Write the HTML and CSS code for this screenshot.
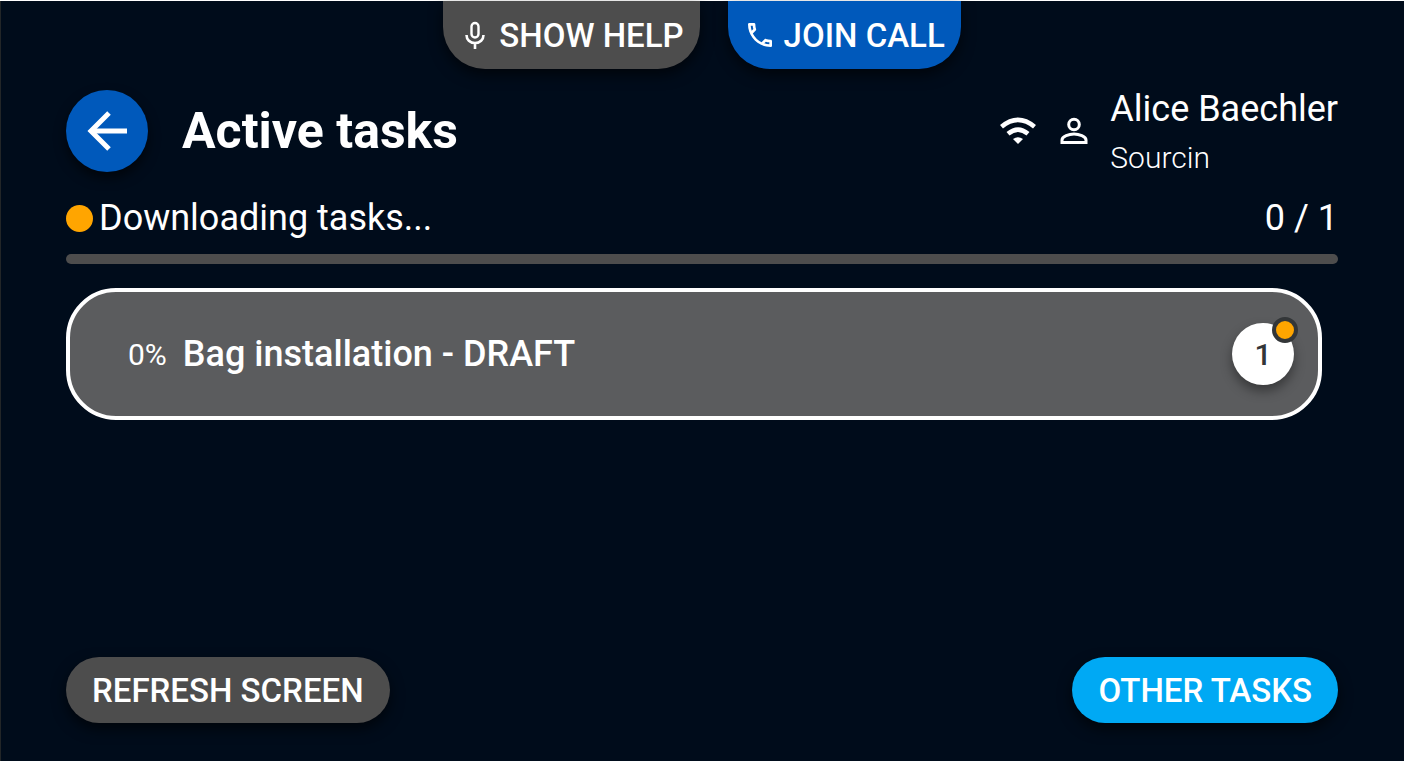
FILE: index.html
```html
<!DOCTYPE html>
<html lang="en">
<head>
<meta charset="utf-8">
<meta name="viewport" content="width=device-width, initial-scale=1">
<title>Active tasks</title>
<link rel="stylesheet" href="styles.css">
</head>
<body>
<div class="screen">
  <nav class="tabs" aria-label="Assistance">
    <button class="tab tab-help" type="button">
      <svg class="tab-icon" viewBox="0 0 32 32" fill="none" stroke="currentColor" stroke-width="2.400" aria-hidden="true"><rect x="12.500" y="4" width="7" height="14.500" rx="3.500"/><path d="M7.500 16c0 4.500 3.500 8 8.500 8s8.500-3.500 8.500-8M16 24v6" stroke-width="2.600"/></svg>
      <span>SHOW HELP</span>
    </button>
    <button class="tab tab-call" type="button">
      <svg class="tab-icon" viewBox="0 0 24 24" fill="currentColor" aria-hidden="true"><path d="M6.540 5c.06.890.210 1.760.450 2.590l-1.200 1.200c-.410-1.200-.670-2.470-.760-3.790h1.510m9.860 12.020c.850.240 1.720.390 2.600.450v1.490c-1.320-.09-2.590-.350-3.800-.750l1.200-1.190M7.500 3H4c-.550 0-1 .450-1 1 0 9.390 7.610 17 17 17 .550 0 1-.450 1-1v-3.490c0-.550-.450-1-1-1-1.240 0-2.450-.200-3.570-.570-.360-.110-.750-.020-1.020.240l-2.200 2.200a15.050 15.050 0 0 1-6.590-6.590l2.200-2.200c.280-.280.360-.670.250-1.020A11.360 11.360 0 0 1 8.500 4c0-.550-.450-1-1-1z"/></svg>
      <span>JOIN CALL</span>
    </button>
  </nav>

  <header class="header">
    <button class="back" type="button" aria-label="Back">
      <svg class="back-icon" viewBox="0 0 44 44" fill="none" stroke="currentColor" stroke-width="5" aria-hidden="true"><path d="M42 22H6"/><path d="M24 4 6 22 24 40"/></svg>
    </button>
    <h1 class="title">Active tasks</h1>
    <div class="status">
      <svg class="wifi" viewBox="0 0 36 28" aria-hidden="true"><path d="M1.500 9.700Q18-4 34.500 9.700" fill="none" stroke="currentColor" stroke-width="4.600"/><path d="M8 16.800Q18 8.500 28 16.800" fill="none" stroke="currentColor" stroke-width="4.600"/><path d="M13 22Q18 18.500 23 22L18 27Z" fill="currentColor"/></svg>
      <svg class="person" viewBox="0 0 28 28" fill="none" stroke="currentColor" stroke-width="3" aria-hidden="true"><circle cx="14" cy="7.500" r="5.300"/><path d="M2 25.500V23c0-3.500 7-6 12-6s12 2.500 12 6v2.500Z"/></svg>
      <div class="user">
        <span class="user-name">Alice Baechler</span>
        <span class="user-org">Sourcin</span>
      </div>
    </div>
  </header>

  <main class="content">
    <div class="download">
      <span class="dot"></span>
      <label class="download-label" for="download-progress">Downloading tasks...</label>
      <span class="download-count">0 / 1</span>
    </div>
    <progress class="bar" id="download-progress" value="0" max="1"></progress>
    <button class="task" type="button">
      <span class="task-percent">0%</span>
      <span class="task-name">Bag installation - DRAFT</span>
      <span class="badge">1<span class="badge-dot"></span></span>
    </button>
  </main>

  <footer class="footer">
    <button class="pill pill-refresh" type="button">REFRESH SCREEN</button>
    <button class="pill pill-other" type="button">OTHER TASKS</button>
  </footer>
</div>
</body>
</html>
```
FILE: styles.css
```css
* {
  box-sizing: border-box;
}

body {
  margin: 0;
  background: #000c1b;
  color: #fff;
  font-family: Roboto, "Liberation Sans", sans-serif;
}

button {
  border: 0;
  color: inherit;
  font: inherit;
  cursor: pointer;
}

.screen {
  display: flex;
  flex-direction: column;
  min-height: 100vh;
  padding: 0 66px 38px;
  border: solid #fff;
  border-width: 1px 0;
  box-shadow: inset 1px 0 #222628;
}

.tabs {
  display: flex;
  justify-content: center;
  gap: 28px;
}

.tab {
  display: flex;
  align-items: center;
  gap: 8px;
  height: 68px;
  padding: 0 16px;
  border-radius: 0 0 42px 42px;
  box-shadow: 0 6px 14px rgba(0, 0, 0, 0.6);
  font-size: 33px;
  font-weight: 500;
}

.tab-help {
  background: #4d4d4d;
}

.tab-call {
  background: #0059bb;
}

.tab-icon {
  width: 32px;
  height: 32px;
}

.header {
  display: flex;
  align-items: center;
  margin-top: 11px;
}

.back {
  display: grid;
  place-items: center;
  width: 82px;
  height: 82px;
  padding: 0;
  border-radius: 50%;
  background: #0059bb;
  box-shadow: 0 6px 12px rgba(0, 0, 0, 0.6);
}

.back-icon {
  width: 44px;
  height: 44px;
}

.title {
  margin: 0 0 0 34px;
  font-size: 50px;
  font-weight: 700;
  line-height: 60px;
}

.status {
  display: flex;
  align-items: center;
  margin-left: auto;
}

.wifi {
  width: 36px;
  height: 28px;
  margin-right: 24px;
}

.person {
  width: 28px;
  height: 28px;
  margin-right: 22px;
}

.user {
  display: flex;
  flex-direction: column;
  padding-top: 4px;
}

.user-name {
  font-size: 36px;
  line-height: 50px;
}

.user-org {
  font-size: 30px;
  font-weight: 300;
  line-height: 48px;
}

.download {
  display: flex;
  align-items: center;
  margin-top: 14px;
  font-size: 36px;
  line-height: 44px;
}

.dot {
  width: 27px;
  height: 27px;
  margin-right: 6px;
  border-radius: 50%;
  background: #ffa500;
}

.download-count {
  margin-left: auto;
}

.bar {
  display: block;
  width: 100%;
  height: 10px;
  margin-top: 14px;
  border: 0;
  border-radius: 5px;
  overflow: hidden;
  background: #4d4d4d;
  appearance: none;
}

.bar::-webkit-progress-bar {
  background: #4d4d4d;
}

.bar::-webkit-progress-value {
  background: #ffa500;
}

.task {
  display: flex;
  align-items: center;
  width: calc(100% - 16px);
  height: 132px;
  margin-top: 24px;
  padding: 0 24px 0 58px;
  border: 4px solid #fff;
  border-radius: 50px;
  background: #5b5c5e;
  text-align: left;
}

.task-percent {
  font-size: 30px;
  margin-right: 16px;
}

.task-name {
  font-size: 36px;
  font-weight: 500;
}

.badge {
  position: relative;
  display: grid;
  place-items: center;
  width: 62px;
  height: 62px;
  margin-left: auto;
  border-radius: 50%;
  background: #fff;
  box-shadow: 0 6px 12px rgba(0, 0, 0, 0.4);
  color: #333638;
  font-size: 30px;
  font-weight: 500;
}

.badge-dot {
  position: absolute;
  top: -6px;
  right: -4px;
  width: 26px;
  height: 26px;
  border: 4px solid #333638;
  border-radius: 50%;
  background: #ffa500;
}

.footer {
  display: flex;
  justify-content: space-between;
  margin-top: auto;
}

.pill {
  height: 66px;
  padding: 0 26px;
  border-radius: 33px;
  box-shadow: 0 6px 14px rgba(0, 0, 0, 0.6);
  font-size: 33px;
  font-weight: 500;
}

.pill-refresh {
  background: #4d4d4d;
}

.pill-other {
  background: #00a9f4;
}
```
